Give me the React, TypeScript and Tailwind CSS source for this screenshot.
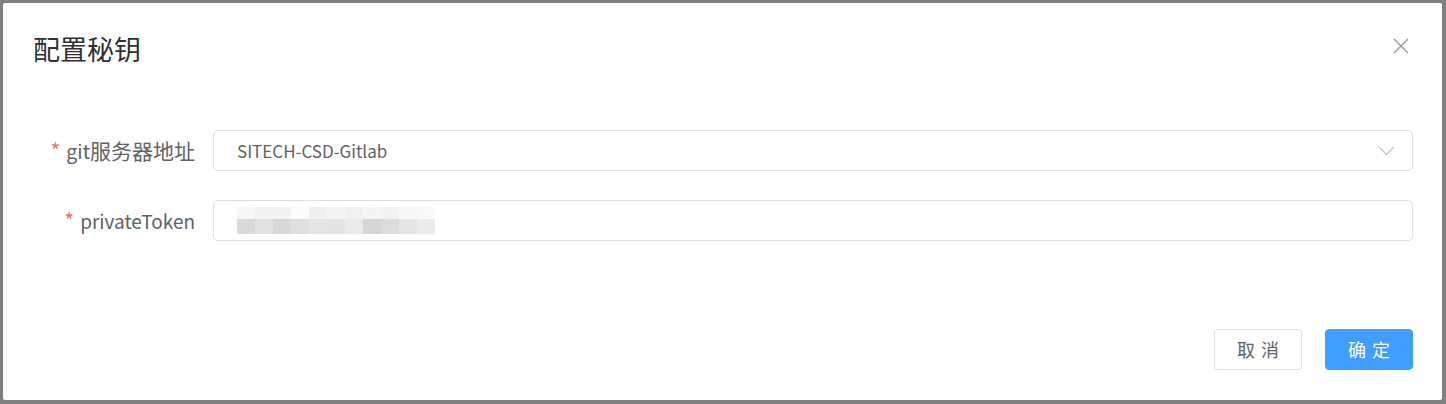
import React from 'react'

const topCells = ['#f6f6f6', '#f1f1f1', '#f3f3f3', '#fbfbfb', '#efefef', '#f4f4f4', '#f0f0f0', '#f5f5f5', '#f2f2f2', '#f7f7f7', '#f9f9f9']
const bottomCells = ['#dadada', '#e1e1e1', '#d8d8d8', '#dfdfdf', '#e5e5e5', '#e4e4e4', '#eaeaea', '#d5d5d5', '#dcdcdc', '#e6e6e6', '#ebebeb']

function Field({ label, children }: { label: React.ReactNode; children: React.ReactNode }) {
  return (
    <div className="flex items-center h-[41px]">
      <label className="w-[180px] shrink-0 pr-[18px] text-right text-[21px] text-[#606266] leading-[41px]">
        <span className="text-[#f56c6c] mr-[6px]">*</span>
        {label}
      </label>
      {children}
    </div>
  )
}

export default function App() {
  return (
    <div
      className="w-[1446px] h-[404px] bg-[#808080] pt-[3px] pl-[3px] pr-[4px] pb-[4px]"
      style={{ fontFamily: '"Noto Sans CJK SC", "Noto Sans", sans-serif' }}
    >
      <div className="h-full bg-white rounded-[2px] flex flex-col">
        {/* header */}
        <div className="flex items-start justify-between pl-[30px] pr-[33px] pt-[31px]">
          <h2 className="text-[27px] leading-[30px] text-[#303133]">配置秘钥</h2>
          <button className="mt-[4px] text-[#909399]">
            <svg width="16" height="16" viewBox="0 0 16 16" fill="none" stroke="currentColor" strokeWidth="1.3">
              <path d="M1 1 L15 15 M15 1 L1 15" />
            </svg>
          </button>
        </div>

        {/* body */}
        <div className="flex flex-col gap-[29px] pl-[30px] pr-[29px] mt-[66px]">
          <Field label={<><span className="text-[19.5px]">git</span>服务器地址</>}>
            <div className="flex-1 h-[41px] border border-[#dcdfe6] rounded-[5px] flex items-center justify-between pl-[23px] pr-[17px]">
              <span className="text-[17px] text-[#606266]">SITECH-CSD-Gitlab</span>
              <svg width="17" height="10" viewBox="0 0 17 10" fill="none" stroke="#c0c4cc" strokeWidth="1.3">
                <path d="M1 1 L8.5 8.5 L16 1" />
              </svg>
            </div>
          </Field>
          <Field label={<span className="text-[19px]">privateToken</span>}>
            <div className="flex-1 h-[41px] border border-[#dcdfe6] rounded-[5px] flex items-center pl-[23px]">
              <div className="flex flex-col">
                <div className="flex h-[12px]">
                  {topCells.map((c, i) => (
                    <div key={i} className="w-[18px] h-full" style={{ backgroundColor: c }} />
                  ))}
                </div>
                <div className="flex h-[15px]">
                  {bottomCells.map((c, i) => (
                    <div key={i} className="w-[18px] h-full" style={{ backgroundColor: c }} />
                  ))}
                </div>
              </div>
            </div>
          </Field>
        </div>

        {/* footer */}
        <div className="flex justify-end gap-[23px] pr-[29px] mt-[88px]">
          <button className="w-[88px] h-[41px] border border-[#dcdfe6] rounded-[4px] text-[18px] text-[#606266] tracking-[6px] pl-[6px]">
            取消
          </button>
          <button className="w-[88px] h-[41px] bg-[#409eff] border border-[#409eff] rounded-[4px] text-[18px] text-white tracking-[6px] pl-[6px]">
            确定
          </button>
        </div>
      </div>
    </div>
  )
}
